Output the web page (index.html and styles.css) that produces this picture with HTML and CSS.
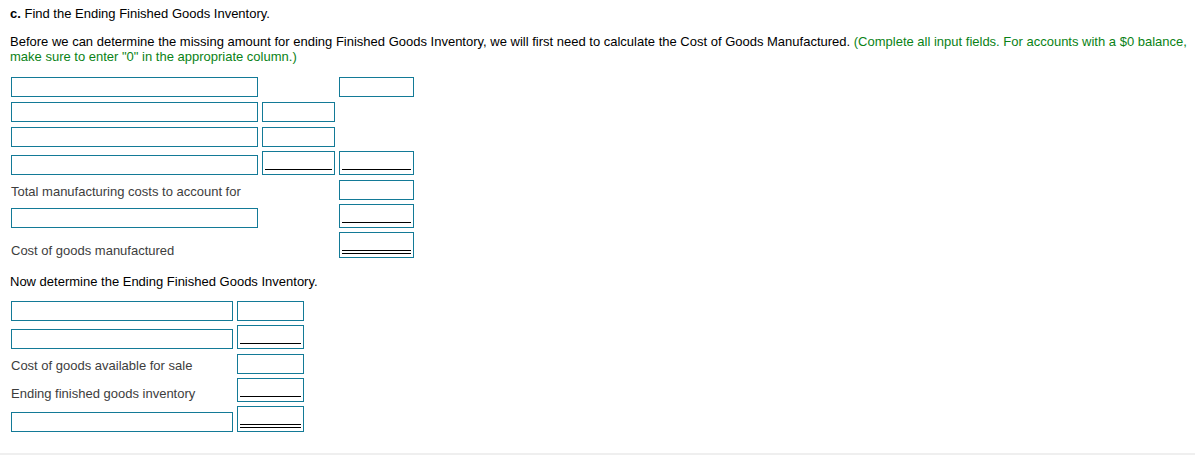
FILE: index.html
```html
<!DOCTYPE html>
<html lang="en">
<head>
<meta charset="utf-8">
<title>Ending Finished Goods Inventory</title>
<link rel="stylesheet" href="styles.css">
</head>
<body>
<div class="page">
  <p class="title"><b>c.</b> Find the Ending Finished Goods Inventory.</p>
  <p class="intro">Before we can determine the missing amount for ending Finished Goods Inventory, we will first need to calculate the Cost of Goods Manufactured. <span class="hint">(Complete all input fields. For accounts with a $0 balance, make sure to enter "0" in the appropriate column.)</span></p>

  <div class="sheet sheet-cogm">
    <div class="field"></div><div class="blank"></div><div class="field"></div>
    <div class="field"></div><div class="field"></div><div class="blank"></div>
    <div class="field"></div><div class="field"></div><div class="blank"></div>
    <div class="field"></div><div class="field single"></div><div class="field single"></div>
    <div class="label">Total manufacturing costs to account for</div><div class="blank"></div><div class="field"></div>
    <div class="field"></div><div class="blank"></div><div class="field single"></div>
    <div class="label label-low">Cost of goods manufactured</div><div class="blank"></div><div class="field double"></div>
  </div>

  <p class="intro2">Now determine the Ending Finished Goods Inventory.</p>

  <div class="sheet sheet-fg">
    <div class="field"></div><div class="field"></div>
    <div class="field"></div><div class="field single"></div>
    <div class="label">Cost of goods available for sale</div><div class="field"></div>
    <div class="label">Ending finished goods inventory</div><div class="field single"></div>
    <div class="field"></div><div class="field double"></div>
  </div>
</div>
<div class="rule"></div>
</body>
</html>
```

FILE: styles.css
```css
html, body {
  margin: 0;
  padding: 0;
  background: #ffffff;
}

body {
  font-family: "Liberation Sans", Arial, sans-serif;
  font-size: 13px;
  line-height: 17px;
  color: #000000;
}

.page {
  padding: 5px 0 0 10px;
}

.title {
  margin: 0;
}

.title b {
  font-weight: bold;
}

.intro {
  margin: 12px 0 0 0;
  line-height: 15px;
}

.hint {
  color: #0a8216;
}

.intro2 {
  margin: 15px 0 0 0;
}

.sheet {
  display: grid;
  grid-auto-rows: minmax(21px, auto);
  row-gap: 4px;
  align-items: end;
  margin-left: 1px;
}

.sheet-cogm {
  margin-top: 12px;
  grid-template-columns: 247px 73px 75px;
  column-gap: 4px;
}

.sheet-fg {
  margin-top: 10px;
  grid-template-columns: 222px 67px;
  column-gap: 4px;
}

.field {
  box-sizing: border-box;
  height: 20px;
  border: 1px solid #137a97;
  background: #ffffff;
}

.field.single {
  height: 24px;
  padding: 0 2px 4px 2px;
  display: flex;
  flex-direction: column;
  justify-content: flex-end;
}

.field.single::after {
  content: "";
  display: block;
  height: 1px;
  background: #000000;
}

.field.double {
  height: 26px;
  padding: 0 2px 3px 2px;
  display: flex;
  flex-direction: column;
  justify-content: flex-end;
}

.field.double::after {
  content: "";
  display: block;
  box-sizing: border-box;
  height: 4px;
  border-top: 1px solid #000000;
  border-bottom: 1px solid #000000;
}

.blank {
  height: 20px;
}

.label {
  color: #3d3d3d;
  padding-bottom: 0;
  white-space: nowrap;
}

.label-low {
  margin-bottom: -1px;
}

.rule {
  margin-top: 21px;
  height: 2px;
  background: #efefef;
}
```
